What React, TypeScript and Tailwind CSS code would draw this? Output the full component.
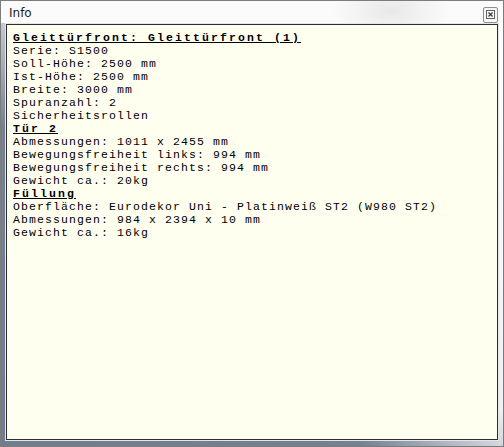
const lines: { text: string; head?: boolean }[] = [
  { text: "Gleittürfront: Gleittürfront (1)", head: true },
  { text: "Serie: S1500" },
  { text: "Soll-Höhe: 2500 mm" },
  { text: "Ist-Höhe: 2500 mm" },
  { text: "Breite: 3000 mm" },
  { text: "Spuranzahl: 2" },
  { text: "Sicherheitsrollen" },
  { text: "Tür 2", head: true },
  { text: "Abmessungen: 1011 x 2455 mm" },
  { text: "Bewegungsfreiheit links: 994 mm" },
  { text: "Bewegungsfreiheit rechts: 994 mm" },
  { text: "Gewicht ca.: 20kg" },
  { text: "Füllung", head: true },
  { text: "Oberfläche: Eurodekor Uni - Platinweiß ST2 (W980 ST2)" },
  { text: "Abmessungen: 984 x 2394 x 10 mm" },
  { text: "Gewicht ca.: 16kg" },
];

const App = () => {
  return (
    <div className="w-[504px] h-[447px] flex flex-col border border-[#7c7c7c] bg-[linear-gradient(to_top_right,#6f7d8f_0%,#748193_36%,#eef0f2_54%,#ffffff_100%)]">
      {/* TITLEBAR */}
      <div className="h-[22px] flex items-center justify-between pl-[8px] pr-[5px] bg-[radial-gradient(ellipse_60px_30px_at_390px_10px,#e8e8e8,#fbfbfb)]">
        <span className="text-[12px] mt-[2px] text-[#1b1b1b] font-['DejaVu_Sans',sans-serif] leading-none">Info</span>
        <div className="w-[15px] h-[16px] mt-[5px] border border-[#8e8e8e] rounded-[2px] bg-[#f7f7f7] flex items-center justify-center">
          <svg width="9" height="9" viewBox="0 0 9 9">
            <rect x="0.5" y="0.5" width="8" height="8" fill="none" stroke="#606060" />
            <path d="M2.5 2.5 L6.5 6.5 M6.5 2.5 L2.5 6.5" stroke="#404040" strokeWidth="1.3" />
          </svg>
        </div>
      </div>
      {/* CONTENT */}
      <div className="flex-1 flex px-[4px] pb-[5px]">
        <div className="flex-1 flex border border-[#e2e6ea]">
          <div className="flex-1 border border-[#2e2e2e] bg-[#fffff0] pl-[6px] pt-[6px] font-['Liberation_Mono',monospace] text-[11.5px] leading-[13px] tracking-[1.1px] text-black">
            {lines.map((l, i) =>
              l.head ? (
                <div key={i} className="font-bold underline tracking-[2.1px] whitespace-pre">
                  {l.text}
                </div>
              ) : (
                <div key={i} className="whitespace-pre">
                  {l.text}
                </div>
              )
            )}
          </div>
        </div>
      </div>
    </div>
  );
};

export default App;
